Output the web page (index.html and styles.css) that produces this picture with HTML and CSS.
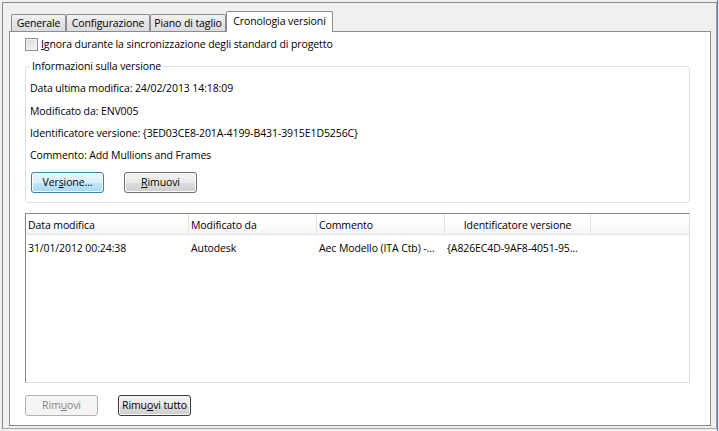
FILE: index.html
```html
<!DOCTYPE html>
<html lang="it">
<head>
<meta charset="utf-8">
<title>Cronologia versioni</title>
<link rel="stylesheet" href="styles.css">
</head>
<body>
<div class="screen">
  <div class="window">
    <div class="tabs">
      <div class="tab t1">Generale</div>
      <div class="tab t2">Configurazione</div>
      <div class="tab t3">Piano di taglio</div>
      <div class="tab t4 active">Cronologia versioni</div>
    </div>
    <div class="page">
      <label class="check"><span class="box"></span><span><u>I</u>gnora durante la sincronizzazione degli standard di progetto</span></label>
      <fieldset class="group">
        <legend>Informazioni sulla versione</legend>
        <div class="line first">Data ultima modifica: 24/02/2013 14:18:09</div>
        <div class="line second">Modificato da: ENV005</div>
        <div class="line">Identificatore versione: {3ED03CE8-201A-4199-B431-3915E1D5256C}</div>
        <div class="line">Commento: Add Mullions and Frames</div>
        <div class="btns">
          <button class="btn hot">Ver<u>s</u>ione...</button>
          <button class="btn"><u>R</u>imuovi</button>
        </div>
      </fieldset>
      <div class="list">
        <div class="lhead">
          <div class="col c1">Data modifica</div>
          <div class="col c2">Modificato da</div>
          <div class="col c3">Commento</div>
          <div class="col c4 center">Identificatore versione</div>
          <div class="col rest"></div>
        </div>
        <div class="lrow">
          <div class="cell c1">31/01/2012 00:24:38</div>
          <div class="cell c2">Autodesk</div>
          <div class="cell c3">Aec Modello (ITA Ctb) -...</div>
          <div class="cell c4">{A826EC4D-9AF8-4051-95...</div>
        </div>
      </div>
      <div class="btns bottom">
        <button class="btn disabled">Rim<u>u</u>ovi</button>
        <button class="btn focus">Rimu<u>o</u>vi tutto</button>
      </div>
    </div>
  </div>
  <div class="edge"></div>
</div>
</body>
</html>
```

FILE: styles.css
```css
* { box-sizing: border-box; }
html, body { margin: 0; padding: 0; }
body {
  width: 719px;
  height: 431px;
  overflow: hidden;
  background: #f0f0f0;
  font-family: "Open Sans", "Noto Sans", sans-serif;
  font-size: 10.5px;
  letter-spacing: -0.1px;
  color: #000;
}
.screen {
  display: flex;
  align-items: flex-start;
  height: 431px;
  padding: 2px 0 0 2px;
}
.window {
  width: 715px;
  height: 427px;
  border-top: 1px solid #8a8a8a;
  border-left: 1px solid #8a8a8a;
  border-right: 1px solid #9a9a9a;
  border-bottom: 1px solid #a8a8a8;
  background: #f0f0f0;
  padding: 8px 0 2px 6px;
  display: flex;
  flex-direction: column;
}
.edge {
  width: 2px;
  height: 431px;
  margin-top: -2px;
  border-left: 1px solid #6f88a8;
  background: #dfe8f3;
}
.tabs {
  display: flex;
  align-items: flex-end;
  height: 20px;
  padding-left: 2px;
}
.tab {
  height: 17px;
  border: 1px solid #898c95;
  border-bottom: none;
  border-radius: 2px 2px 0 0;
  background: linear-gradient(#f3f3f3, #e4e4e4 50%, #dcdcdc);
  display: flex;
  align-items: center;
  justify-content: center;
  line-height: 15px;
  padding-top: 1px;
  white-space: nowrap;
}
.t1 { width: 55px; }
.t2 { width: 84px; }
.t3 { width: 76px; }
.t4 { width: 107px; }
.tab.active {
  height: 21px;
  margin-bottom: -1px;
  background: #fff;
  position: relative;
  z-index: 1;
  align-items: flex-start;
  padding-top: 2px;
}
.page {
  width: 702px;
  height: 395px;
  border: 1px solid #898c95;
  background: #fff;
  display: flex;
  flex-direction: column;
  padding-left: 15px;
}
.check {
  display: flex;
  align-items: center;
  gap: 3px;
  margin-top: 6px;
  height: 13px;
  line-height: 13px;
  white-space: nowrap;
}
.box {
  width: 13px;
  height: 13px;
  border: 1px solid #8f8f8f;
  background: linear-gradient(135deg, #d8d8d8, #f8f8f8);
  box-shadow: inset 0 0 0 1px #f2f2f2;
}
.group {
  margin: 7px 21px 0 0;
  width: 665px;
  min-width: 0;
  border: 1px solid #d5dfe5;
  border-radius: 3px;
  padding: 0 5px 9px 4px;
}
.group legend {
  padding: 0 2px;
  margin-left: 0;
  line-height: 16px;
}
.line {
  line-height: 16px;
  height: 16px;
  margin-top: 6px;
  white-space: nowrap;
}
.line.second { margin-top: 7px; }
.btns {
  display: flex;
  gap: 20px;
  margin-top: 9px;
  padding-left: 1px;
}
.btn {
  width: 73px;
  height: 21px;
  padding: 0;
  font: inherit;
  letter-spacing: inherit;
  color: #000;
  border: 1px solid #707070;
  border-radius: 3px;
  background: linear-gradient(#f2f2f2, #ebebeb 50%, #dddddd 51%, #cfcfcf);
  box-shadow: inset 0 0 0 1px #fcfcfc;
  line-height: 17px;
  text-align: center;
  white-space: nowrap;
}
.btn.hot {
  border-color: #3c7fb1;
  background: linear-gradient(#eaf6fd, #d9f0fc 50%, #bee6fd 51%, #a7d9f5);
}
.btn.focus {
  border-color: #3a3a3a;
  box-shadow: inset 0 0 0 1px #f8f8f8;
}
.btn.disabled {
  border-color: #adb2b5;
  background: #f4f4f4;
  box-shadow: none;
  color: #838383;
}
.btn u, .check u { text-underline-offset: 1px; }
.list {
  margin-top: 10px;
  width: 665px;
  height: 170px;
  border-top: 1px solid #828790;
  border-left: 1px solid #828790;
  border-right: 1px solid #dcdcdc;
  border-bottom: 1px solid #dcdcdc;
  display: flex;
  flex-direction: column;
}
.lhead {
  display: flex;
  height: 21px;
  border-bottom: 1px solid #e3e4e6;
  background: linear-gradient(#ffffff, #ffffff 40%, #f3f4f6);
}
.col {
  line-height: 20px;
  padding-top: 1px;
  border-right: 1px solid #e1e3e6;
  padding-left: 2px;
  white-space: nowrap;
  overflow: hidden;
}
.c1 { width: 163px; }
.c2 { width: 128px; }
.c3 { width: 128px; }
.c4 { width: 146px; }
.rest { flex: 1; border-right: none; }
.center { text-align: center; padding-left: 0; }
.lrow {
  display: flex;
  margin-top: 5px;
  height: 17px;
}
.cell {
  line-height: 17px;
  padding-left: 2px;
  white-space: nowrap;
  overflow: hidden;
}
.btns.bottom {
  margin-top: 12px;
  padding-left: 0;
}
```
